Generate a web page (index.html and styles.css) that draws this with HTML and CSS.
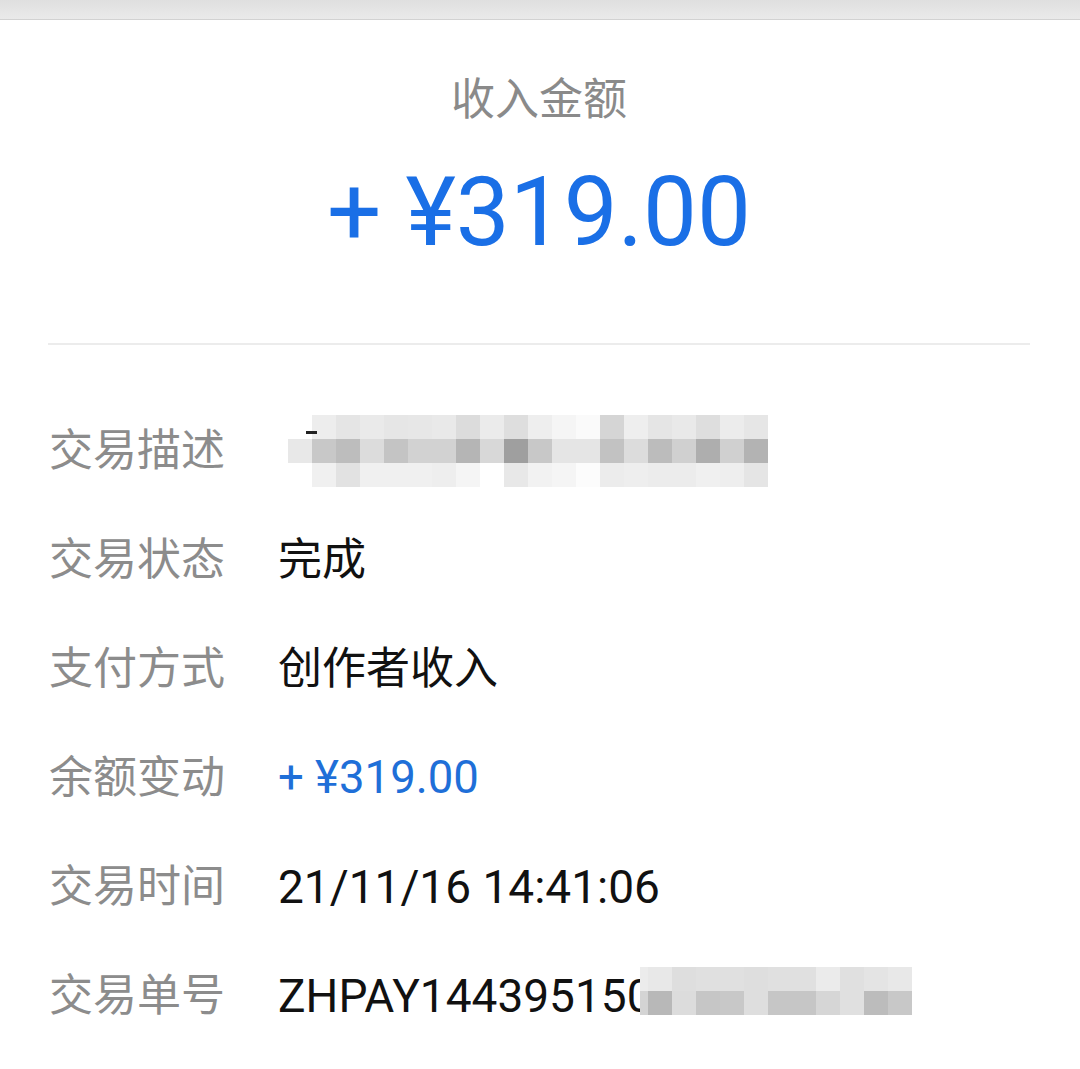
FILE: index.html
```html
<!DOCTYPE html>
<html lang="zh-CN">
<head>
<meta charset="utf-8">
<title>收入金额</title>
<link rel="stylesheet" href="styles.css">
</head>
<body>
<div class="topbar"></div>
<main class="card">
  <header class="summary">
    <div class="summary-title">收入金额</div>
    <div class="summary-amount">+ ¥319.00</div>
  </header>
  <div class="divider"></div>
  <section class="details">
    <div class="row">
      <div class="label">交易描述</div>
      <div class="value">
        <div class="mosaic mosaic-desc">
          <span style="background:#fff"></span><span style="background:#ededed"></span><span style="background:#e5e5e5"></span><span style="background:#eaeaea"></span><span style="background:#e6e6e6"></span><span style="background:#e7e7e7"></span><span style="background:#e9e9e9"></span><span style="background:#dcdcdc"></span><span style="background:#ebebeb"></span><span style="background:#dedede"></span><span style="background:#eeeeee"></span><span style="background:#f5f5f5"></span><span style="background:#fafafa"></span><span style="background:#d5d5d5"></span><span style="background:#eeeeee"></span><span style="background:#e5e5e5"></span><span style="background:#e9e9e9"></span><span style="background:#dedede"></span><span style="background:#ececec"></span><span style="background:#e6e6e6"></span>
          <span style="background:#e8e8e8"></span><span style="background:#c8c8c8"></span><span style="background:#bdbdbd"></span><span style="background:#dcdcdc"></span><span style="background:#c4c4c4"></span><span style="background:#d2d2d2"></span><span style="background:#d2d2d2"></span><span style="background:#b5b5b5"></span><span style="background:#d8d8d8"></span><span style="background:#9f9f9f"></span><span style="background:#c8c8c8"></span><span style="background:#e5e5e5"></span><span style="background:#e5e5e5"></span><span style="background:#c2c2c2"></span><span style="background:#dcdcdc"></span><span style="background:#bcbcbc"></span><span style="background:#d0d0d0"></span><span style="background:#aeaeae"></span><span style="background:#d0d0d0"></span><span style="background:#b3b3b3"></span>
          <span style="background:#fff"></span><span style="background:#f0f0f0"></span><span style="background:#e2e2e2"></span><span style="background:#f0f0f0"></span><span style="background:#f0f0f0"></span><span style="background:#f0f0f0"></span><span style="background:#eeeeee"></span><span style="background:#f5f5f5"></span><span style="background:#fff"></span><span style="background:#e8e8e8"></span><span style="background:#f2f2f2"></span><span style="background:#f5f5f5"></span><span style="background:#fcfcfc"></span><span style="background:#ececec"></span><span style="background:#eeeeee"></span><span style="background:#ececec"></span><span style="background:#ececec"></span><span style="background:#f0f0f0"></span><span style="background:#eeeeee"></span><span style="background:#e5e5e5"></span>
          <i class="mosaic-dash"></i>
        </div>
      </div>
    </div>
    <div class="row">
      <div class="label">交易状态</div>
      <div class="value">完成</div>
    </div>
    <div class="row">
      <div class="label">支付方式</div>
      <div class="value">创作者收入</div>
    </div>
    <div class="row">
      <div class="label">余额变动</div>
      <div class="value value-blue">+ ¥319.00</div>
    </div>
    <div class="row">
      <div class="label">交易时间</div>
      <div class="value value-num">21/11/16 14:41:06</div>
    </div>
    <div class="row">
      <div class="label">交易单号</div>
      <div class="value value-num value-order">
        <span class="order-text">ZHPAY144395150</span>
        <div class="mosaic mosaic-order">
          <span style="background:#ececec"></span><span style="background:#e8e8e8"></span><span style="background:#dedede"></span><span style="background:#e0e0e0"></span><span style="background:#e0e0e0"></span><span style="background:#dedede"></span><span style="background:#e0e0e0"></span><span style="background:#e0e0e0"></span><span style="background:#ebebeb"></span><span style="background:#e0e0e0"></span><span style="background:#e4e4e4"></span><span style="background:#e8e8e8"></span>
          <span style="background:#d4d4d4"></span><span style="background:#b8b8b8"></span><span style="background:#dcdcdc"></span><span style="background:#c6c6c6"></span><span style="background:#c8c8c8"></span><span style="background:#dedede"></span><span style="background:#c6c6c6"></span><span style="background:#c6c6c6"></span><span style="background:#d6d6d6"></span><span style="background:#e0e0e0"></span><span style="background:#bcbcbc"></span><span style="background:#c8c8c8"></span>
        </div>
      </div>
    </div>
  </section>
</main>
</body>
</html>
```
FILE: styles.css
```css
html, body {
  margin: 0;
  padding: 0;
  background: #ffffff;
}
body {
  font-family: Roboto, "Noto Sans CJK SC", "Noto Sans", sans-serif;
  width: 1080px;
  height: 1069px;
  overflow: hidden;
}
.topbar {
  height: 19px;
  background: linear-gradient(#dfdfdf, #eaeaea);
  border-bottom: 1px solid #d2d2d2;
}
.card {
  padding: 0 50px 0 48px;
}
.summary {
  display: flex;
  flex-direction: column;
  align-items: center;
  padding-top: 50px;
  padding-bottom: 71px;
}
.summary-title {
  font-size: 44px;
  line-height: 60px;
  color: #8a8a8a;
}
.summary-amount {
  margin-top: 22px;
  font-size: 96px;
  line-height: 120px;
  color: #1a6fe6;
}
.divider {
  height: 2px;
  background: #ececec;
}
.details {
  padding-top: 51px;
}
.row {
  display: flex;
  align-items: center;
  height: 109px;
}
.label {
  width: 230px;
  flex: none;
  font-size: 44px;
  line-height: 60px;
  color: #8c8c8c;
  padding-left: 1px;
  box-sizing: border-box;
}
.value {
  font-size: 44px;
  line-height: 60px;
  color: #111111;
  display: flex;
  align-items: center;
}
.value-num {
  font-size: 46px;
}
.value-blue {
  color: #1f6fd8;
  font-size: 45.5px;
}
.mosaic {
  display: grid;
  grid-auto-rows: 24px;
  position: relative;
}
.mosaic span {
  display: block;
}
.mosaic-desc {
  grid-template-columns: repeat(20, 24px);
  margin-left: 10px;
}
.mosaic-dash {
  position: absolute;
  left: 18px;
  top: 16px;
  width: 11px;
  height: 3px;
  background: #222;
}
.value-order {
  position: relative;
}
.mosaic-order {
  position: absolute;
  left: 362px;
  top: 1px;
  grid-template-columns: 8px repeat(11, 24px);
}
```
